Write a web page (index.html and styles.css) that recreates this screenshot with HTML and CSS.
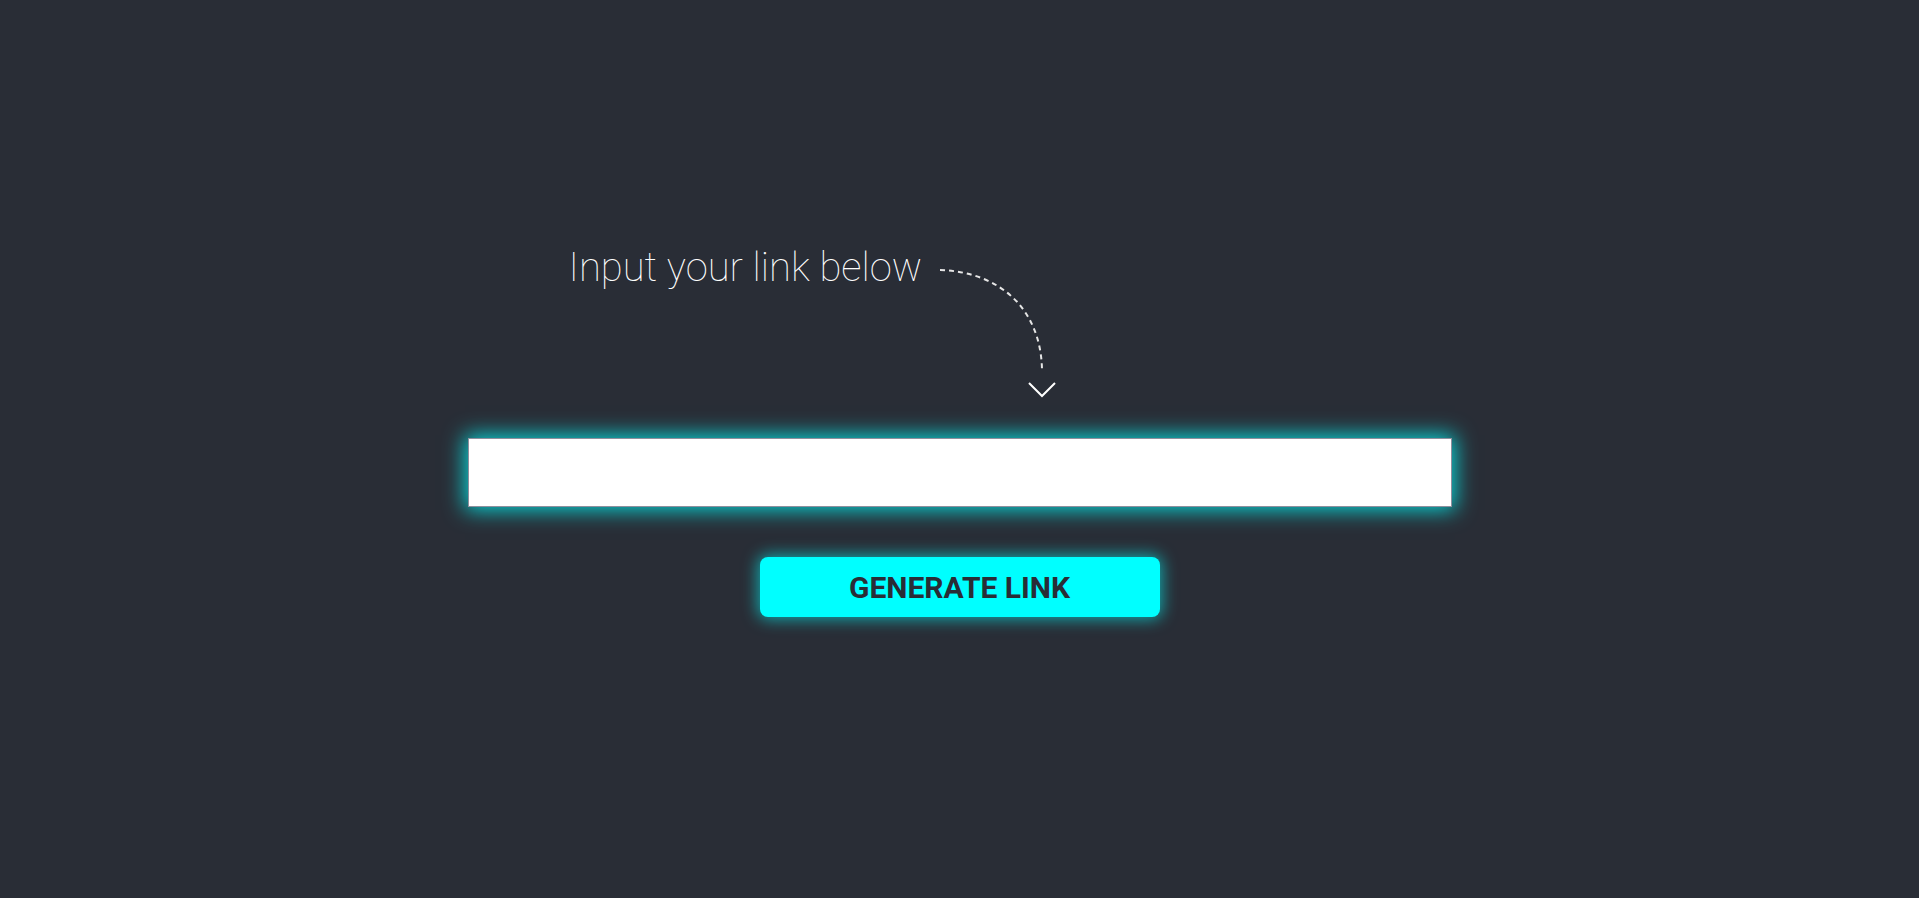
FILE: index.html
```html
<!DOCTYPE html>
<html lang="en">
<head>
<meta charset="utf-8">
<title>Link generator</title>
<link rel="stylesheet" href="styles.css">
</head>
<body>
<main class="page">
  <div class="panel">
    <div class="header">
      <h1 class="title">Input your link below</h1>
      <svg class="arrow" width="125" height="140" viewBox="0 0 125 140" aria-hidden="true">
        <path class="arrow-curve" d="M4 8 C65 10 105 48 106 108"/>
        <path class="arrow-head" d="M93 121 L106 134 L119 121"/>
      </svg>
    </div>
    <input class="link-input" type="text" aria-label="Link">
    <button class="generate" type="button">GENERATE LINK</button>
  </div>
</main>
</body>
</html>
```
FILE: styles.css
```css
html, body {
  margin: 0;
  padding: 0;
  height: 100%;
  background: #292d36;
}
body {
  font-family: Roboto, "Noto Sans", sans-serif;
}
.page {
  min-height: 100%;
  display: flex;
  justify-content: center;
  padding-top: 244px;
  box-sizing: border-box;
}
.panel {
  width: 984px;
  display: flex;
  flex-direction: column;
  align-items: center;
}
.header {
  align-self: stretch;
  display: flex;
  align-items: flex-start;
  padding-left: 101px;
  height: 158px;
  margin-bottom: 36px;
}
.title {
  margin: 0;
  font-weight: 100;
  font-size: 40px;
  line-height: 48px;
  color: #ffffff;
  white-space: nowrap;
}
.arrow {
  margin-left: 14px;
  margin-top: 18px;
  flex: none;
}
.arrow-curve {
  fill: none;
  stroke: #e6e6e6;
  stroke-width: 2;
  stroke-dasharray: 5 4;
}
.arrow-head {
  fill: none;
  stroke: #ffffff;
  stroke-width: 2;
}
.link-input {
  display: block;
  width: 984px;
  height: 69px;
  box-sizing: border-box;
  border: 1px solid #8f8f9d;
  background: #ffffff;
  outline: none;
  margin: 0;
  padding: 0 16px;
  font-size: 20px;
  box-shadow: 0 0 20px 3px rgba(0, 255, 255, 0.8);
}
.generate {
  margin-top: 50px;
  width: 400px;
  height: 60px;
  border: none;
  border-radius: 8px;
  background: #00ffff;
  color: #292d36;
  font-family: Roboto, "Noto Sans", sans-serif;
  font-weight: 700;
  font-size: 30px;
  box-shadow: 0 0 16px 2px rgba(0, 255, 255, 0.6);
  cursor: pointer;
}
```
